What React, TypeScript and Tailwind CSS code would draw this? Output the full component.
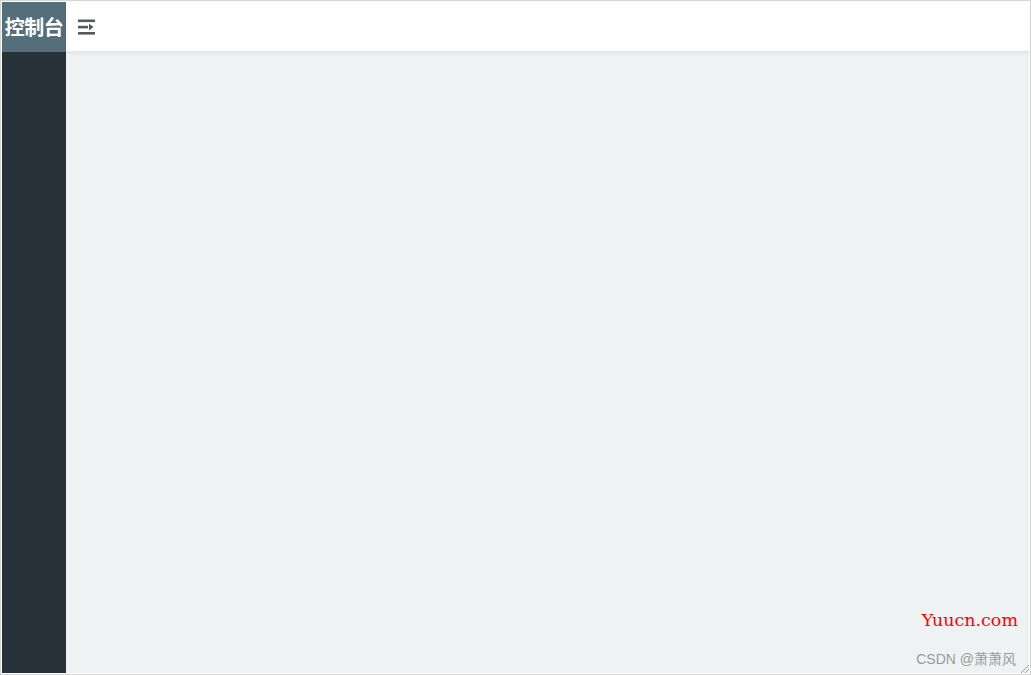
import React from "react";

export default function App() {
  return (
    <div className="w-[1031px] h-[675px] bg-white border border-[#d4d4d4] p-px relative overflow-hidden" style={{ fontFamily: '"Noto Sans", "Noto Sans CJK SC", sans-serif' }}>
      <div className="flex w-full h-full">
        <div className="w-[64px] flex flex-col bg-[#263238]">
          <div className="h-[50px] bg-[#546e7a] flex items-center justify-center">
            <span className="text-white font-bold text-[20px] leading-none tracking-[-0.5px]" style={{ fontFamily: '"Noto Sans CJK SC", sans-serif' }}>控制台</span>
          </div>
        </div>
        <div className="flex-1 flex flex-col bg-[#eff2f3]">
          <div className="h-[50px] bg-white flex items-center pl-[12px] shadow-[0_1px_4px_rgba(0,21,41,0.08)] relative z-10 border-b border-[#e6e6e6]">
            <svg width="18" height="16" viewBox="0 0 18 16">
              <rect x="0" y="0.5" width="17" height="2.6" fill="#55585e" />
              <rect x="0" y="6.8" width="10" height="2.6" fill="#55585e" />
              <path d="M11 4.8 L15.5 8.1 L11 11.4 Z" fill="#55585e" />
              <rect x="0" y="13" width="17" height="2.6" fill="#55585e" />
            </svg>
          </div>
          <div className="flex-1" />
        </div>
      </div>
      <div className="absolute right-[12px] top-[606px] text-[#ff0000] text-[17.5px]" style={{ fontFamily: '"DejaVu Serif", "Liberation Serif", serif' }}>Yuucn.com</div>
      <div className="absolute right-[14px] top-[648px] text-[#9a9a9a] text-[14px]" style={{ fontFamily: '"Liberation Sans", "Noto Sans CJK SC", sans-serif' }}>CSDN @萧萧风</div>
      <svg className="absolute right-0 bottom-0" width="12" height="12" viewBox="0 0 12 12">
        <path d="M11 3 L3 11 M11 7 L7 11" stroke="#9a9a9a" strokeWidth="1" />
      </svg>
    </div>
  );
}
